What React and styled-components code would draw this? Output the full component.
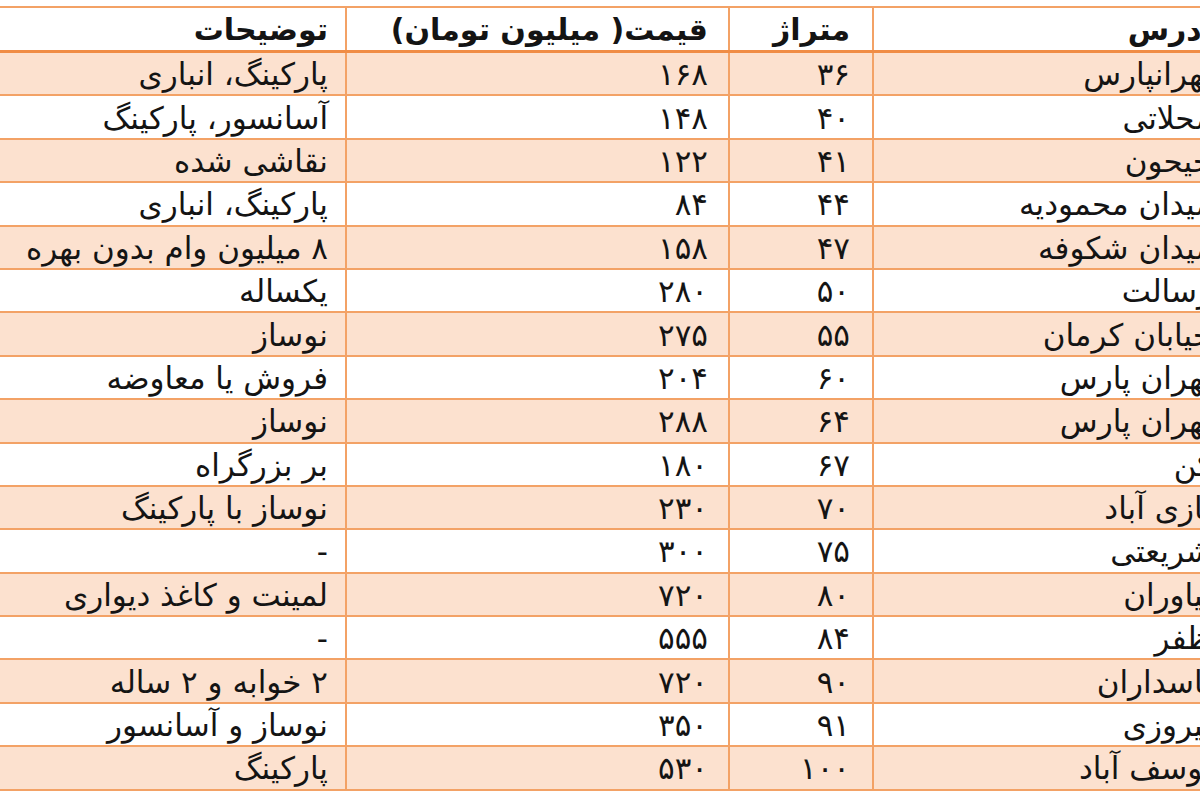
import React from "react";
import styled, { createGlobalStyle } from "styled-components";

const Global = createGlobalStyle`
  html, body { margin: 0; padding: 0; background: #ffffff; }
  body { overflow: hidden; font-family: "DejaVu Sans", "Noto Sans", sans-serif; }
`;

const Page = styled.div`
  width: 1200px;
  height: 800px;
  overflow: hidden;
  padding-top: 6px;
  box-sizing: border-box;
  background: #fff;
`;

const Table = styled.div`
  width: 1232px;
  display: flex;
  flex-direction: column;
  border-top: 2px solid #f3a266;
`;

const Row = styled.div`
  display: grid;
  grid-template-columns: 345px 383px 144px 1fr;
  height: ${(p) => (p.$header ? "45px" : "43.4px")};
  box-sizing: border-box;
  background: ${(p) => (p.$shaded ? "#fce1cf" : "#ffffff")};
  border-bottom: ${(p) => (p.$header ? "3px solid #f08c45" : "2px solid #f3a266")};
`;

const Cell = styled.div`
  direction: rtl;
  text-align: right;
  display: flex;
  align-items: center;
  justify-content: flex-start;
  padding-right: ${(p) => p.$pad}px;
  padding-top: 2px;
  box-sizing: border-box;
  white-space: nowrap;
  overflow: visible;
  line-height: 1;
  font-size: ${(p) => (p.$bold ? 30 : 31)}px;
  font-weight: ${(p) => (p.$bold ? 700 : 400)};
  color: #141414;
  border-left: ${(p) => (p.$first ? "none" : "2px solid #f3a266")};
`;

const pads = [17, 20, 22, 20];

const header = ["توضیحات", "قیمت( میلیون تومان)", "متراژ", "آدرس"];

const rows = [
  ["پارکینگ، انباری", "۱۶۸", "۳۶", "تهرانپارس"],
  ["آسانسور، پارکینگ", "۱۴۸", "۴۰", "محلاتی"],
  ["نقاشی شده", "۱۲۲", "۴۱", "جیحون"],
  ["پارکینگ، انباری", "۸۴", "۴۴", "میدان محمودیه"],
  ["۸ میلیون وام بدون بهره", "۱۵۸", "۴۷", "میدان شکوفه"],
  ["یکساله", "۲۸۰", "۵۰", "رسالت"],
  ["نوساز", "۲۷۵", "۵۵", "خیابان کرمان"],
  ["فروش یا معاوضه", "۲۰۴", "۶۰", "تهران پارس"],
  ["نوساز", "۲۸۸", "۶۴", "تهران پارس"],
  ["بر بزرگراه", "۱۸۰", "۶۷", "کن"],
  ["نوساز با پارکینگ", "۲۳۰", "۷۰", "نازی آباد"],
  ["-", "۳۰۰", "۷۵", "شریعتی"],
  ["لمینت و کاغذ دیواری", "۷۲۰", "۸۰", "نیاوران"],
  ["-", "۵۵۵", "۸۴", "ظفر"],
  ["۲ خوابه و ۲ ساله", "۷۲۰", "۹۰", "پاسداران"],
  ["نوساز و آسانسور", "۳۵۰", "۹۱", "پیروزی"],
  ["پارکینگ", "۵۳۰", "۱۰۰", "یوسف آباد"],
];

export default function App() {
  return (
    <>
      <Global />
      <Page>
        <Table>
          <Row $header>
            {header.map((t, i) => (
              <Cell key={i} $pad={pads[i]} $first={i === 0} $bold>
                {t}
              </Cell>
            ))}
          </Row>
          {rows.map((r, ri) => (
            <Row key={ri} $shaded={ri % 2 === 0}>
              {r.map((t, i) => (
                <Cell key={i} $pad={pads[i]} $first={i === 0}>
                  {t}
                </Cell>
              ))}
            </Row>
          ))}
        </Table>
      </Page>
    </>
  );
}
